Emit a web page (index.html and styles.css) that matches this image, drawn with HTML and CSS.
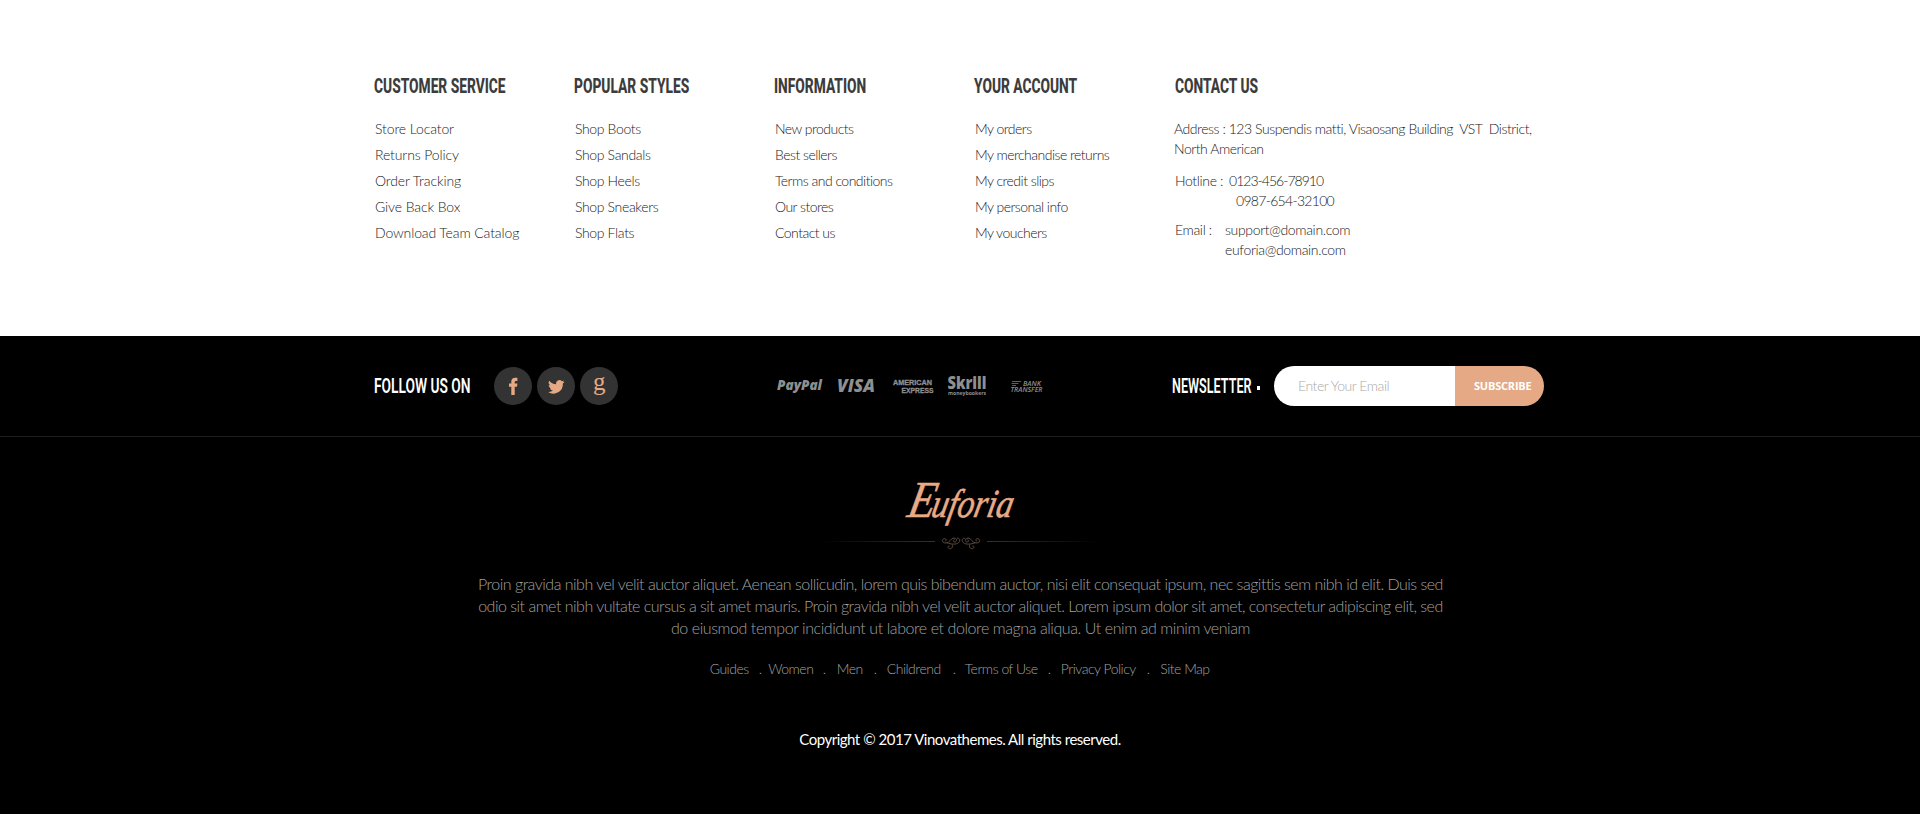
FILE: index.html
```html
<!DOCTYPE html>
<html lang="en">
<head>
<meta charset="utf-8">
<title>Euforia</title>
<link rel="stylesheet" href="styles.css">
</head>
<body>
<footer>
  <section class="links container">
    <div class="col service">
      <h3><span>CUSTOMER SERVICE</span></h3>
      <ul><li>Store Locator</li><li>Returns Policy</li><li>Order Tracking</li><li>Give Back Box</li><li>Download Team Catalog</li></ul>
    </div>
    <div class="col styles">
      <h3><span>POPULAR STYLES</span></h3>
      <ul><li>Shop Boots</li><li>Shop Sandals</li><li>Shop Heels</li><li>Shop Sneakers</li><li>Shop Flats</li></ul>
    </div>
    <div class="col">
      <h3><span>INFORMATION</span></h3>
      <ul><li>New products</li><li>Best sellers</li><li>Terms and conditions</li><li>Our stores</li><li>Contact us</li></ul>
    </div>
    <div class="col">
      <h3><span>YOUR ACCOUNT</span></h3>
      <ul><li>My orders</li><li>My merchandise returns</li><li>My credit slips</li><li>My personal info</li><li>My vouchers</li></ul>
    </div>
    <div class="col contact">
      <h3><span>CONTACT US</span></h3>
      <p class="address">Address : 123 Suspendis matti, Visaosang Building&nbsp; VST&nbsp; District,<br>North American</p>
      <div class="row hotline"><span>Hotline :</span><p>0123-456-78910<br><span class="second">0987-654-32100</span></p></div>
      <div class="row email"><span>Email :</span><p>support@domain.com<br>euforia@domain.com</p></div>
    </div>
  </section>

  <section class="bar">
    <div class="bar-inner container">
      <h4 class="follow"><span>FOLLOW US ON</span></h4>
      <div class="social">
        <a><svg viewBox="0 0 38 38"><path d="M17.300 28v-8.200h-2.300v-3.200h2.300v-1.900c0-2.700 1.400-3.900 3.900-3.900h2.200v3.200h-1.300c-1 0-1.400.4-1.400 1.300v1.300h2.700l-.4 3.200h-2.300V28z"/></svg></a>
        <a><svg viewBox="0 0 38 38"><path d="M27.500 14.700a7 7 0 0 1-1.900.6 3.300 3.300 0 0 0 1.400-1.900 6.800 6.800 0 0 1-2.100.8 3.400 3.400 0 0 0-5.800 3.100 9.500 9.500 0 0 1-6.900-3.500 3.400 3.400 0 0 0 1 4.500 3.300 3.300 0 0 1-1.500-.4c0 1.700 1.100 3 2.700 3.300a3.400 3.400 0 0 1-1.500.1 3.400 3.400 0 0 0 3.100 2.300 6.800 6.800 0 0 1-4.900 1.400 9.600 9.600 0 0 0 14.800-8.600 7 7 0 0 0 1.600-1.700z"/></svg></a>
        <a><svg viewBox="0 0 38 38"><text x="13" y="23" class="g">g</text></svg></a>
      </div>
      <svg class="payments" viewBox="0 0 270 24">
        <text x="-1" y="15.500" class="paypal" textLength="45" lengthAdjust="spacingAndGlyphs">PayPal</text>
        <text x="59" y="18" class="visa" textLength="38" lengthAdjust="spacingAndGlyphs">VISA</text>
        <text x="115" y="10.500" class="amex" textLength="39" lengthAdjust="spacingAndGlyphs">AMERICAN</text>
        <text x="123.500" y="18.500" class="amex" textLength="32" lengthAdjust="spacingAndGlyphs">EXPRESS</text>
        <text x="169.500" y="14.500" class="skrill" textLength="39" lengthAdjust="spacingAndGlyphs">Skrill</text>
        <text x="170" y="20.500" class="money" textLength="38" lengthAdjust="spacingAndGlyphs">moneybookers</text>
        <path class="wire" d="M234 7.500h9M233.500 9.500h7M234 11.500h4"/>
        <text x="245" y="11.500" class="bank" textLength="18" lengthAdjust="spacingAndGlyphs">BANK</text>
        <text x="232.500" y="17.500" class="bank" textLength="32" lengthAdjust="spacingAndGlyphs">TRANSFER</text>
      </svg>
      <h4 class="news"><span>NEWSLETTER</span></h4>
      <i class="tick"></i>
      <form class="signup"><span class="field">Enter Your Email</span><span class="button">SUBSCRIBE</span></form>
    </div>
  </section>

  <section class="about">
    <svg class="logo" viewBox="0 0 300 100">
      <defs>
        <linearGradient id="fl" gradientUnits="userSpaceOnUse" x1="10" x2="125" y1="0" y2="0"><stop offset="0" stop-color="#3c2e26" stop-opacity="0"/><stop offset="1" stop-color="#3c2e26"/></linearGradient>
        <linearGradient id="fr" gradientUnits="userSpaceOnUse" x1="177" x2="290" y1="0" y2="0"><stop offset="0" stop-color="#3c2e26"/><stop offset="1" stop-color="#3c2e26" stop-opacity="0"/></linearGradient>
      </defs>
      <g class="brand" transform="translate(0 52) skewX(-12)">
        <text class="cap" x="96" y="0" textLength="27" lengthAdjust="spacingAndGlyphs">E</text>
        <text x="120" y="0" textLength="81" lengthAdjust="spacingAndGlyphs">uforia</text>
      </g>
      <rect x="10" y="76" width="115" height="1" fill="url(#fl)"/>
      <rect x="177" y="76" width="113" height="1" fill="url(#fr)"/>
      <g class="curl">
        <path id="half" d="M135 76c1.500 0 1.500-2.300-.2-2.300c-3.500 0-3.600 4.300 1.200 4.300c4 0 4.500-5 8-5c3 0 3.300 4 .8 4c-1.800 0-1.800-2.300-.3-2.300M137 77.800c4 1.500 9 2 11.500 0c3-2.500 0-6-1.800-4M142 79.500c1.500 2.500-.5 4.500-2.500 4.200c-2-.5-1.800-3 0-2.800"/>
        <use href="#half" transform="matrix(-1 0 0 1 302 0)"/>
      </g>
    </svg>
    <p class="text"><span class="l1">Proin gravida nibh vel velit auctor aliquet. Aenean sollicudin, lorem quis bibendum auctor, nisi elit consequat ipsum, nec sagittis sem nibh id elit. Duis sed</span><span class="l1">odio sit amet nibh vultate cursus a sit amet mauris. Proin gravida nibh vel velit auctor aliquet. Lorem ipsum dolor sit amet, consectetur adipiscing elit, sed</span><span class="l3">do eiusmod tempor incididunt ut labore et dolore magna aliqua. Ut enim ad minim veniam</span></p>
    <nav><a>Guides</a><i>.</i><a>Women</a><i>.</i><a>Men</a><i>.</i><a>Childrend</a><i>.</i><a>Terms of Use</a><i>.</i><a>Privacy Policy</a><i>.</i><a>Site Map</a></nav>
    <p class="copy">Copyright © 2017 Vinovathemes. All rights reserved.</p>
  </section>
</footer>
</body>
</html>
```
FILE: styles.css
```css
* { box-sizing: border-box; margin: 0; padding: 0; }
body { background: #000; font-family: Lato, sans-serif; font-weight: 300; white-space: nowrap; overflow: hidden; }
.container { padding-left: 374px; }
.links { display: grid; grid-template-columns: 200px 200px 200px 200px 1fr; height: 336px; padding-top: 72px; background: #fff; color: #222; font-size: 14px; }
h3, h4 { font-family: Roboto, sans-serif; font-size: 20px; line-height: 28px; }
h3 { color: #3c3c3c; font-weight: 800; }
h3 span, h4 span { display: inline-block; transform-origin: 0 50%; transform: scaleX(.688); }
ul { list-style: none; margin-top: 16px; padding-left: 1px; }
li { line-height: 26px; letter-spacing: -.52px; }
.service li { letter-spacing: -.12px; }
.styles li { letter-spacing: -.35px; }
.contact { line-height: 20px; letter-spacing: -.35px; }
.contact h3 { padding-left: 1px; letter-spacing: 0; }
.address { margin-top: 19px; letter-spacing: -.45px; }
.row { display: flex; padding-left: 1px; }
.row > span { width: 54px; }
.hotline { margin-top: 12px; }
.hotline p { letter-spacing: -.98px; }
.second { padding-left: 7px; letter-spacing: -.7px; }
.email { margin-top: 9px; }
.email > span { width: 50px; }

.bar { height: 101px; border-bottom: 1px solid #1e1e1e; }
.bar-inner { display: flex; align-items: center; height: 100px; }
.bar-inner > * { flex: none; }
h4 { color: #fff; font-weight: 600; }
.follow { width: 120px; }
.social { display: flex; gap: 5px; width: 284px; }
.social a { width: 38px; height: 38px; border-radius: 50%; background: #333; }
.social svg { display: block; width: 38px; height: 38px; fill: #e5a985; }
.g { font: 25px "Liberation Serif", serif; }
.payments { width: 270px; height: 24px; overflow: visible; fill: #8f8f8f; font-family: "Open Sans", sans-serif; font-weight: 800; }
.paypal { font-size: 14px; font-style: italic; }
.visa { font-size: 17px; font-style: italic; }
.amex { font-family: "Liberation Sans", sans-serif; font-size: 7px; font-weight: 700; stroke: #8f8f8f; stroke-width: .3; }
.skrill { font-size: 17px; }
.money { font-size: 6px; font-weight: 700; }
.bank { font-size: 6.5px; font-style: italic; font-weight: 600; }
.wire { stroke: #777; stroke-width: .8; }
.news { width: 85px; margin-left: 124px; }
.news span { transform: scaleX(.63); }
.tick { width: 3px; height: 4px; margin: 4px 14px 0 0; background: #fff; }
.signup { display: flex; width: 270px; height: 40px; border-radius: 20px; overflow: hidden; line-height: 40px; }
.field { width: 181px; padding-left: 24px; background: #fff; color: #aaa; font-size: 14px; letter-spacing: -.45px; }
.button { flex: 1; padding-left: 19px; background: #e5a985; color: #fff; font: 700 11px/40px "Open Sans", sans-serif; letter-spacing: -.2px; }

.about { display: flex; flex-direction: column; align-items: center; padding-top: 28px; color: #a0a0a0; }
.logo { width: 300px; height: 100px; }
.brand { fill: #e9aa86; stroke: #e9aa86; stroke-width: .6; font: italic 40px "Liberation Serif", serif; }
.cap { font-size: 52px; }
.curl { fill: none; stroke: #5d4b40; stroke-width: 1; }
.text { display: flex; flex-direction: column; align-items: center; margin-top: 8px; padding-left: 1px; font-size: 16px; line-height: 22px; }
.l1 { letter-spacing: -.5px; }
.l3 { letter-spacing: -.42px; }
nav { display: grid; grid-template-columns: 49px 9.5px 54.5px 14px 37px 13px 66px 12px 83px 13px 86px 13.5px 52px; margin-top: 20px; padding-left: 2px; font-size: 14px; line-height: 20px; letter-spacing: -.5px; }
nav i { font-style: normal; }
.copy { margin-top: 50px; color: #fff; font-size: 15px; line-height: 20px; font-weight: 400; letter-spacing: -.48px; }
```
